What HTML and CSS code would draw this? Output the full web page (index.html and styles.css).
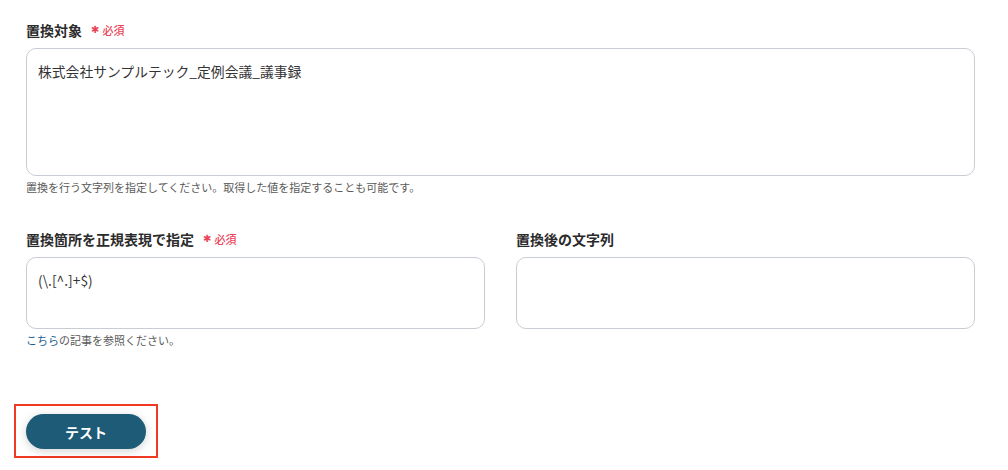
FILE: index.html
```html
<!DOCTYPE html>
<html lang="ja">
<head>
<meta charset="utf-8">
<link rel="stylesheet" href="styles.css">
</head>
<body>
<div class="page">
  <div class="field">
    <div class="label">置換対象<span class="req"><span class="star">✱</span>必須</span></div>
    <div class="box tall">株式会社サンプルテック_定例会議_議事録</div>
    <div class="help">置換を行う文字列を指定してください。取得した値を指定することも可能です。</div>
  </div>
  <div class="row">
    <div class="field col">
      <div class="label">置換箇所を正規表現で指定<span class="req"><span class="star">✱</span>必須</span></div>
      <div class="box short">(\.[^.]+$)</div>
      <div class="help"><span class="link">こちら</span>の記事を参照ください。</div>
    </div>
    <div class="field col">
      <div class="label">置換後の文字列</div>
      <div class="box short"></div>
    </div>
  </div>
  <div class="actions">
    <div class="highlight"><button class="btn">テスト</button></div>
  </div>
</div>
</body>
</html>
```

FILE: styles.css
```css
html, body { margin: 0; padding: 0; background: #fff; }
body { font-family: "Noto Sans CJK JP", "Noto Sans", sans-serif; color: #333; }
.page { padding: 20px 33px 0 26px; }
.field { display: flex; flex-direction: column; }
.label { font-size: 14px; font-weight: 700; line-height: 20px; color: #2b2b2b; display: flex; align-items: center; }
.req { color: #ea4459; font-size: 11px; font-weight: 500; margin-left: 9px; display: flex; align-items: center; }
.star { font-family: "DejaVu Sans", sans-serif; font-size: 10px; margin-right: 3px; }
.box { margin-top: 8px; border: 1px solid #c8ccd3; border-radius: 10px; box-sizing: border-box; padding: 12px 11px; font-size: 13.8px; line-height: 20px; color: #333; }
.tall { height: 128px; }
.short { height: 72px; }
.help { margin-top: 3px; font-size: 11px; line-height: 16px; color: #5a5a5a; }
.link { color: #1b5f8f; }
.row { display: flex; gap: 31px; margin-top: 34px; }
.col { flex: 1; }
.actions { margin-top: 56px; }
.highlight { display: inline-block; border: 2px solid #f03a24; padding: 8px 10px 7px; margin-left: -12px; }
.btn { display: block; width: 120px; height: 35px; border: none; border-radius: 18px; background: #1d5b76; color: #fff; font-family: "Noto Sans CJK JP", sans-serif; font-size: 14px; font-weight: 700; box-shadow: 0 2px 10px rgba(0,0,0,0.18); }
```
